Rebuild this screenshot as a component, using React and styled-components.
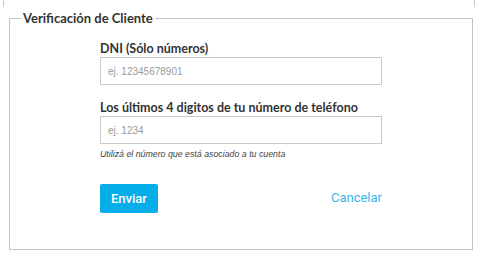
import React from "react";
import styled, { createGlobalStyle } from "styled-components";

const Global = createGlobalStyle`
  html, body { margin: 0; padding: 0; background: #fff; }
  * { box-sizing: border-box; }
`;

const Page = styled.div`
  width: 480px;
  height: 258px;
  display: flex;
  flex-direction: column;
`;

const TopStrip = styled.div`
  margin-left: 3px;
  width: 472px;
  height: 7px;
  border-left: 1px solid #c9c9c9;
  border-right: 1px solid #c9c9c9;
`;

const Box = styled.fieldset`
  margin: 3px 0 0 9px;
  width: 464px;
  height: 240px;
  border: 1px solid #c4c4c4;
  padding: 15px 0 0 0;
  min-width: 0;
`;

const Legend = styled.legend`
  margin-left: 11px;
  padding: 0 2px;
  font-family: Lato, "Open Sans", sans-serif;
  font-weight: 700;
  font-size: 13px;
  line-height: 16px;
  color: #333;
`;

const Form = styled.div`
  margin-left: 90px;
  width: 282px;
  display: flex;
  flex-direction: column;
`;

const Label = styled.label`
  font-family: Lato, "Open Sans", sans-serif;
  font-weight: 700;
  font-size: 12.5px;
  line-height: 16px;
  color: #333;
  margin-top: ${(p) => p.$top || 0}px;
`;

const Input = styled.input`
  width: 282px;
  height: 28px;
  border: 1px solid #c9c9c9;
  padding: 0 7px;
  font-family: "Liberation Sans", Arial, sans-serif;
  font-size: 10px;
  color: #333;
  outline: none;
  &::placeholder { color: #9a9a9a; }
`;

const Help = styled.div`
  margin-top: 5px;
  font-family: "Liberation Sans", Arial, sans-serif;
  font-style: italic;
  font-size: 8.8px;
  line-height: 10px;
  color: #444;
`;

const Actions = styled.div`
  margin-top: 25px;
  display: flex;
  align-items: center;
  justify-content: space-between;
`;

const Button = styled.button`
  width: 58px;
  height: 29px;
  border: none;
  border-radius: 2px;
  background: #05aee9;
  color: #fff;
  font-family: Roboto, sans-serif;
  font-weight: 500;
  font-size: 13px;
  padding: 0;
`;

const Link = styled.a`
  font-family: Roboto, sans-serif;
  font-size: 13px;
  color: #3cb5e8;
  text-decoration: none;
  margin-top: -3px;
`;

export default function App() {
  return (
    <Page>
      <Global />
      <TopStrip />
      <Box>
        <Legend>Verificación de Cliente</Legend>
        <Form>
          <Label>DNI (Sólo números)</Label>
          <Input placeholder="ej. 12345678901" />
          <Label $top={15}>Los últimos 4 digitos de tu número de teléfono</Label>
          <Input placeholder="ej. 1234" />
          <Help>Utilizá el número que está asociado a tu cuenta</Help>
          <Actions>
            <Button>Enviar</Button>
            <Link href="#">Cancelar</Link>
          </Actions>
        </Form>
      </Box>
    </Page>
  );
}
